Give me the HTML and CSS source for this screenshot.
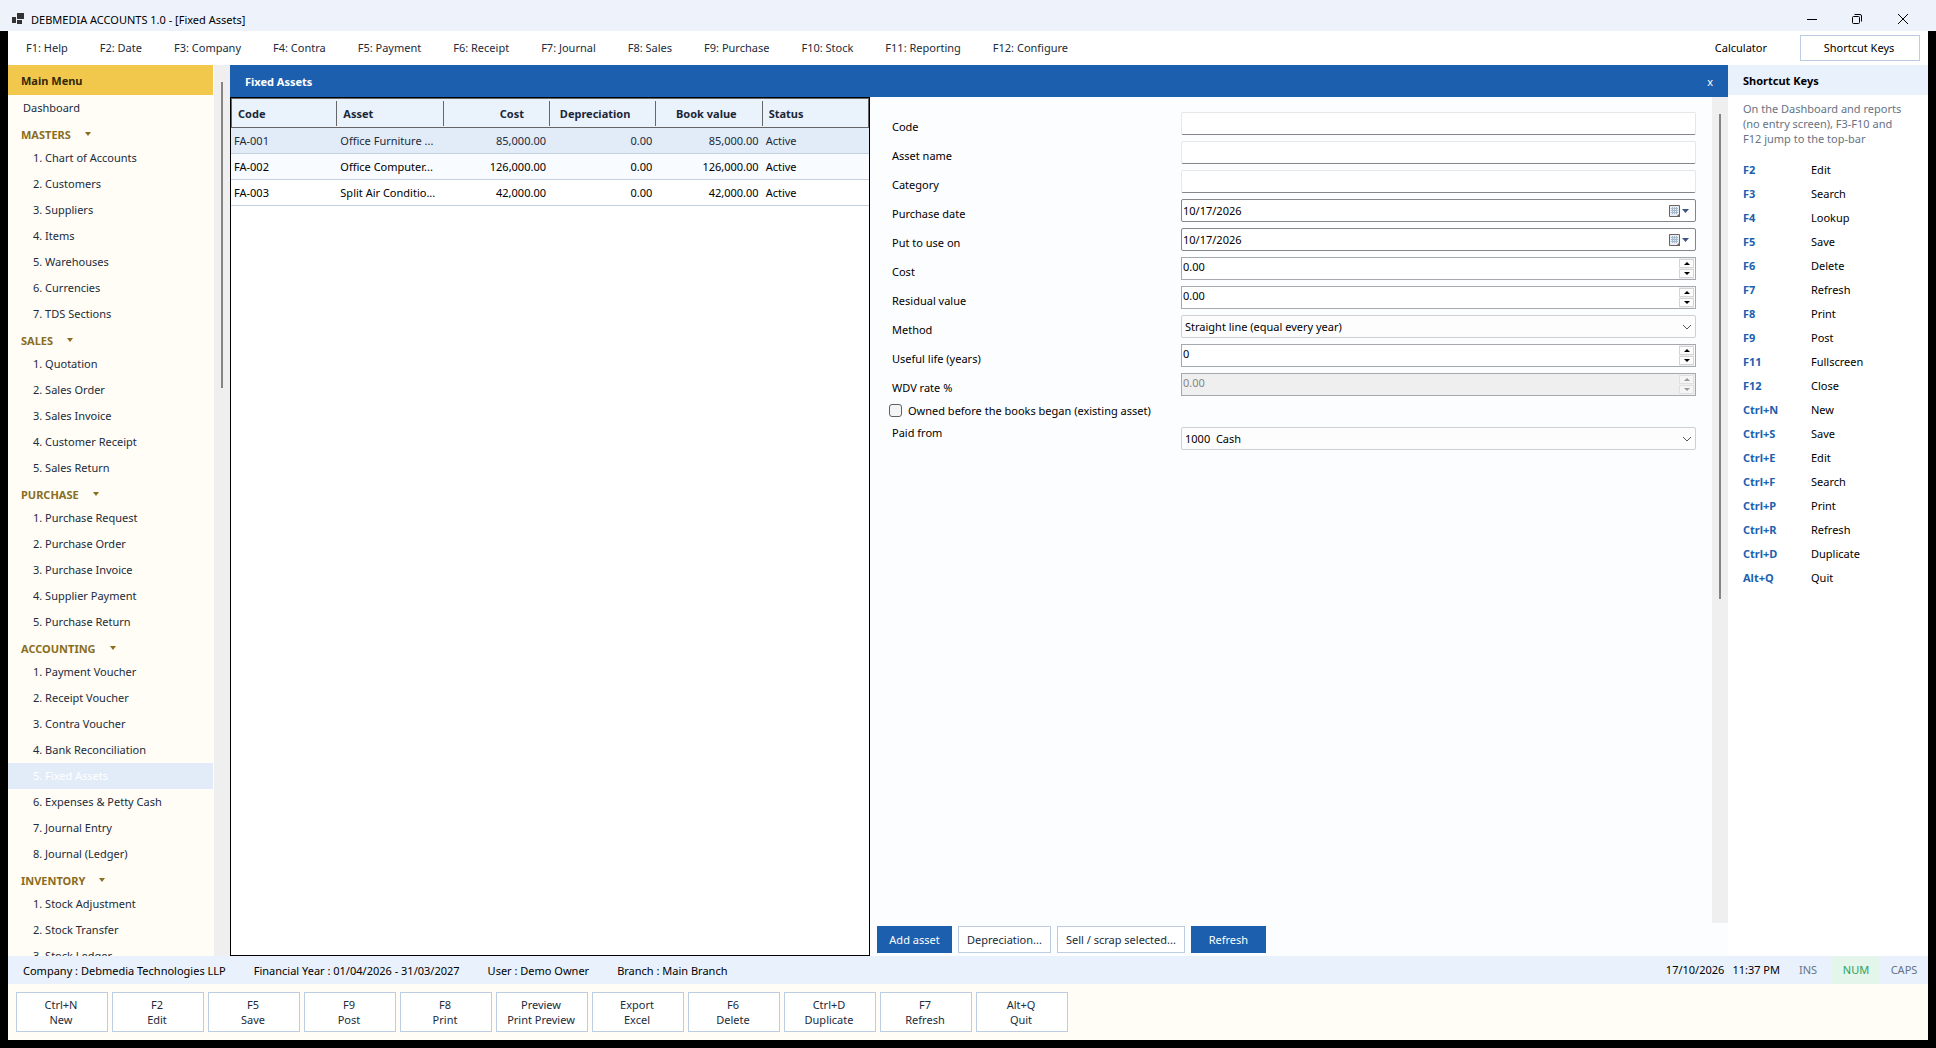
FILE: index.html
```html
<!DOCTYPE html>
<html lang="en">
<head>
<meta charset="utf-8">
<title>DEBMEDIA ACCOUNTS 1.0 - [Fixed Assets]</title>
<link rel="stylesheet" href="styles.css">
</head>
<body>
<header class="titlebar">
  <svg class="app-icon" width="12" height="12" viewBox="0 0 12 12" aria-hidden="true"><path fill="#333" d="M5 0h7v6H5zM0 4h4v6H0zM5 7h5v4H5z"/></svg>
  <h1 class="title">DEBMEDIA ACCOUNTS 1.0 - [Fixed Assets]</h1>
  <div class="window-controls">
    <button type="button" aria-label="Minimize"><svg width="12" height="12" viewBox="0 0 12 12"><path d="M1 6.500h10"/></svg></button>
    <button type="button" aria-label="Restore"><svg width="12" height="12" viewBox="0 0 12 12"><rect x="1.500" y="3.500" width="7" height="7" rx="1"/><path d="M3.500 1.500H9a1.500 1.500 0 0 1 1.500 1.500v5.500"/></svg></button>
    <button type="button" aria-label="Close"><svg width="12" height="12" viewBox="0 0 12 12"><path d="M1 1l10 10M11 1L1 11"/></svg></button>
  </div>
</header>
<div class="frame">
  <div class="menubar">
    <nav class="menu" aria-label="Function keys">
      <button type="button">F1: Help</button>
      <button type="button">F2: Date</button>
      <button type="button">F3: Company</button>
      <button type="button">F4: Contra</button>
      <button type="button">F5: Payment</button>
      <button type="button">F6: Receipt</button>
      <button type="button">F7: Journal</button>
      <button type="button">F8: Sales</button>
      <button type="button">F9: Purchase</button>
      <button type="button">F10: Stock</button>
      <button type="button">F11: Reporting</button>
      <button type="button">F12: Configure</button>
    </nav>
    <button type="button" class="calculator">Calculator</button>
    <button type="button" class="outlined shortcut-toggle">Shortcut Keys</button>
  </div>

  <div class="workspace">
    <aside class="sidebar">
      <nav class="sidebar-nav" aria-label="Main Menu">
        <h2 class="sidebar-title">Main Menu</h2>
        <a class="dashboard" href="#">Dashboard</a>
        <button type="button" class="group">MASTERS <span class="caret"></span></button>
        <a href="#">1. Chart of Accounts</a>
        <a href="#">2. Customers</a>
        <a href="#">3. Suppliers</a>
        <a href="#">4. Items</a>
        <a href="#">5. Warehouses</a>
        <a href="#">6. Currencies</a>
        <a href="#">7. TDS Sections</a>
        <button type="button" class="group">SALES <span class="caret"></span></button>
        <a href="#">1. Quotation</a>
        <a href="#">2. Sales Order</a>
        <a href="#">3. Sales Invoice</a>
        <a href="#">4. Customer Receipt</a>
        <a href="#">5. Sales Return</a>
        <button type="button" class="group">PURCHASE <span class="caret"></span></button>
        <a href="#">1. Purchase Request</a>
        <a href="#">2. Purchase Order</a>
        <a href="#">3. Purchase Invoice</a>
        <a href="#">4. Supplier Payment</a>
        <a href="#">5. Purchase Return</a>
        <button type="button" class="group">ACCOUNTING <span class="caret"></span></button>
        <a href="#">1. Payment Voucher</a>
        <a href="#">2. Receipt Voucher</a>
        <a href="#">3. Contra Voucher</a>
        <a href="#">4. Bank Reconciliation</a>
        <a class="current" href="#" aria-current="page">5. Fixed Assets</a>
        <a href="#">6. Expenses &amp; Petty Cash</a>
        <a href="#">7. Journal Entry</a>
        <a href="#">8. Journal (Ledger)</a>
        <button type="button" class="group">INVENTORY <span class="caret"></span></button>
        <a href="#">1. Stock Adjustment</a>
        <a href="#">2. Stock Transfer</a>
        <a href="#">3. Stock Ledger</a>
      </nav>
      <div class="scrollbar"><div class="thumb sidebar-thumb"></div></div>
    </aside>

    <main class="document">
      <div class="document-title">
        <h2>Fixed Assets</h2>
        <button type="button" aria-label="Close Fixed Assets">x</button>
      </div>
      <div class="panes">
        <section class="list" aria-label="Asset list">
          <table>
            <thead>
              <tr><th>Code</th><th>Asset</th><th class="num">Cost</th><th class="num">Depreciation</th><th class="num">Book value</th><th>Status</th></tr>
            </thead>
            <tbody>
              <tr class="selected"><td>FA-001</td><td>Office Furniture ...</td><td class="num">85,000.00</td><td class="num">0.00</td><td class="num">85,000.00</td><td>Active</td></tr>
              <tr class="alt"><td>FA-002</td><td>Office Computer...</td><td class="num">126,000.00</td><td class="num">0.00</td><td class="num">126,000.00</td><td>Active</td></tr>
              <tr><td>FA-003</td><td>Split Air Conditio...</td><td class="num">42,000.00</td><td class="num">0.00</td><td class="num">42,000.00</td><td>Active</td></tr>
            </tbody>
          </table>
        </section>

        <form class="entry">
          <div class="entry-body">
            <div class="fields">
              <div class="row"><label for="code">Code</label><input class="text" id="code" type="text"></div>
              <div class="row"><label for="name">Asset name</label><input class="text" id="name" type="text"></div>
              <div class="row"><label for="category">Category</label><input class="text" id="category" type="text"></div>
              <div class="row"><label for="purchased">Purchase date</label>
                <div class="field date"><input id="purchased" type="text" value="10/17/2026"><button type="button" aria-label="Pick purchase date"><svg width="22" height="14" viewBox="0 0 22 14"><path fill="#e9eef4" stroke="#6e625f" d="M1.500 1.500h10v9l-2 2h-8z"/><path stroke="#a9b9cc" d="M3 4.500h7M3 6.500h7M3 8.500h7M4.500 3v7M6.500 3v7M8.500 3v7"/><path fill="#6e625f" d="M12 9v4H8z"/><path fill="#3c5584" d="M14 5h7l-3.500 4z"/></svg></button></div></div>
              <div class="row"><label for="used">Put to use on</label>
                <div class="field date"><input id="used" type="text" value="10/17/2026"><button type="button" aria-label="Pick put to use date"><svg width="22" height="14" viewBox="0 0 22 14"><path fill="#e9eef4" stroke="#6e625f" d="M1.500 1.500h10v9l-2 2h-8z"/><path stroke="#a9b9cc" d="M3 4.500h7M3 6.500h7M3 8.500h7M4.500 3v7M6.500 3v7M8.500 3v7"/><path fill="#6e625f" d="M12 9v4H8z"/><path fill="#3c5584" d="M14 5h7l-3.500 4z"/></svg></button></div></div>
              <div class="row"><label for="cost">Cost</label>
                <div class="field spin"><input id="cost" type="text" inputmode="decimal" value="0.00"><span class="steps"><button type="button" class="up" aria-label="Increase cost"></button><button type="button" class="down" aria-label="Decrease cost"></button></span></div></div>
              <div class="row"><label for="residual">Residual value</label>
                <div class="field spin"><input id="residual" type="text" inputmode="decimal" value="0.00"><span class="steps"><button type="button" class="up" aria-label="Increase residual value"></button><button type="button" class="down" aria-label="Decrease residual value"></button></span></div></div>
              <div class="row"><label for="method">Method</label>
                <div class="field combo"><select id="method"><option>Straight line (equal every year)</option></select><svg width="10" height="6" viewBox="0 0 10 6" aria-hidden="true"><path d="M1 1l4 4 4-4"/></svg></div></div>
              <div class="row"><label for="life">Useful life (years)</label>
                <div class="field spin"><input id="life" type="text" inputmode="numeric" value="0"><span class="steps"><button type="button" class="up" aria-label="Increase useful life"></button><button type="button" class="down" aria-label="Decrease useful life"></button></span></div></div>
              <div class="row"><label for="wdv">WDV rate %</label>
                <div class="field spin disabled"><input id="wdv" type="text" value="0.00" disabled><span class="steps"><button type="button" class="up" aria-label="Increase WDV rate" disabled></button><button type="button" class="down" aria-label="Decrease WDV rate" disabled></button></span></div></div>
              <div class="check-row"><input id="owned" type="checkbox"><label for="owned">Owned before the books began (existing asset)</label></div>
              <div class="row paid"><label for="paid">Paid from</label>
                <div class="field combo"><select id="paid"><option>1000&nbsp; Cash</option></select><svg width="10" height="6" viewBox="0 0 10 6" aria-hidden="true"><path d="M1 1l4 4 4-4"/></svg></div></div>
            </div>
            <div class="scrollbar"><div class="thumb form-thumb"></div></div>
          </div>
          <div class="actions">
            <button type="button" class="primary">Add asset</button>
            <button type="button" class="outlined">Depreciation...</button>
            <button type="button" class="outlined">Sell / scrap selected...</button>
            <button type="button" class="primary">Refresh</button>
          </div>
        </form>
      </div>
    </main>

    <aside class="shortcuts">
      <h2>Shortcut Keys</h2>
      <p>On the Dashboard and reports<br>(no entry screen), F3-F10 and<br>F12 jump to the top-bar</p>
      <dl>
        <dt>F2</dt><dd>Edit</dd>
        <dt>F3</dt><dd>Search</dd>
        <dt>F4</dt><dd>Lookup</dd>
        <dt>F5</dt><dd>Save</dd>
        <dt>F6</dt><dd>Delete</dd>
        <dt>F7</dt><dd>Refresh</dd>
        <dt>F8</dt><dd>Print</dd>
        <dt>F9</dt><dd>Post</dd>
        <dt>F11</dt><dd>Fullscreen</dd>
        <dt>F12</dt><dd>Close</dd>
        <dt>Ctrl+N</dt><dd>New</dd>
        <dt>Ctrl+S</dt><dd>Save</dd>
        <dt>Ctrl+E</dt><dd>Edit</dd>
        <dt>Ctrl+F</dt><dd>Search</dd>
        <dt>Ctrl+P</dt><dd>Print</dd>
        <dt>Ctrl+R</dt><dd>Refresh</dd>
        <dt>Ctrl+D</dt><dd>Duplicate</dd>
        <dt>Alt+Q</dt><dd>Quit</dd>
      </dl>
    </aside>
  </div>

  <div class="statusbar">
    <span>Company : Debmedia Technologies LLP</span>
    <span>Financial Year : 01/04/2026 - 31/03/2027</span>
    <span>User : Demo Owner</span>
    <span>Branch : Main Branch</span>
    <div class="status-end">
      <time class="clock">17/10/2026</time>
      <time class="clock">11:37 PM</time>
      <span class="lock">INS</span>
      <span class="lock on">NUM</span>
      <span class="lock">CAPS</span>
    </div>
  </div>

  <footer class="keybar">
    <button type="button" class="outlined">Ctrl+N<br>New</button>
    <button type="button" class="outlined">F2<br>Edit</button>
    <button type="button" class="outlined">F5<br>Save</button>
    <button type="button" class="outlined">F9<br>Post</button>
    <button type="button" class="outlined">F8<br>Print</button>
    <button type="button" class="outlined">Preview<br>Print Preview</button>
    <button type="button" class="outlined">Export<br>Excel</button>
    <button type="button" class="outlined">F6<br>Delete</button>
    <button type="button" class="outlined">Ctrl+D<br>Duplicate</button>
    <button type="button" class="outlined">F7<br>Refresh</button>
    <button type="button" class="outlined">Alt+Q<br>Quit</button>
  </footer>
</div>
</body>
</html>
```
FILE: styles.css
```css
:root {
  --blue: #1c5fae;
  --pale: #e9f1fc;
  --cream: #fffdf5;
  --line: #bccde3;
  --ink: #212b3b;
}

* { box-sizing: border-box; }

body {
  margin: 0;
  height: 100vh;
  display: flex;
  flex-direction: column;
  background: #000;
  color: #000;
  font: 11px/15px "Noto Sans", "Open Sans", sans-serif;
}

h1, h2, p, dl, dd { margin: 0; }
h1, h2 { font-size: 11px; line-height: 15px; }

button, input, select {
  margin: 0;
  padding: 0;
  border: 0;
  border-radius: 0;
  background: none;
  color: inherit;
  font: inherit;
}

a { color: inherit; text-decoration: none; }

/* Window title bar */
.titlebar {
  flex: none;
  height: 31px;
  padding: 6px 9px 0 12px;
  display: flex;
  align-items: center;
  gap: 7px;
  background: #eef3fb;
}
.title { font-weight: 400; padding-top: 1px; }
.window-controls { margin-left: auto; display: flex; }
.window-controls button { width: 45px; height: 24px; display: grid; place-items: center; }
.window-controls button:last-child { width: 48px; }
.window-controls svg { fill: none; stroke: #000; }

.frame {
  flex: 1;
  min-height: 0;
  margin: 0 8px 8px;
  display: flex;
  flex-direction: column;
  background: #fff;
}

/* Function key menu */
.menubar {
  flex: none;
  height: 34px;
  padding: 0 8px 0 18px;
  display: flex;
  align-items: center;
  color: var(--ink);
}
.menu { display: flex; gap: 32px; padding-bottom: 2px; }
.calculator { margin-left: auto; padding-bottom: 2px; color: #000; }
.outlined { border: 1px solid var(--line); background: #fff; color: var(--ink); }
.shortcut-toggle { width: 120px; height: 26px; margin-left: 33px; padding: 0 2px 2px 0; color: #000; }

.workspace {
  flex: 1;
  min-height: 0;
  display: grid;
  grid-template-columns: 222px minmax(0, 1fr) 200px;
  grid-template-rows: minmax(0, 1fr);
}

.scrollbar { flex: none; width: 16px; padding-top: 17px; background: #efefef; }
.thumb { width: 2px; margin: 0 auto; background: #858585; }
.sidebar-thumb { height: 35%; }
.form-thumb { height: 60%; }

/* Main menu */
.sidebar { display: flex; background: var(--cream); }
.sidebar-nav {
  flex: 1;
  overflow: hidden;
  display: flex;
  flex-direction: column;
  color: var(--ink);
}
.sidebar-title {
  flex: none;
  height: 30px;
  margin-right: 1px;
  padding: 8px 13px 0;
  background: #f2c84c;
  color: #33290a;
}
.sidebar-nav a { flex: none; height: 26px; margin-right: 1px; padding: 5px 25px 0; }
.sidebar-nav .dashboard { padding-left: 15px; }
.sidebar-nav .current { background: #e2ecf8; color: #fff; }
.group {
  flex: none;
  height: 24px;
  padding: 2px 13px 0;
  display: flex;
  align-items: center;
  gap: 14px;
  color: #8a6d1f;
  font-weight: 700;
}
.caret { border: 3px solid transparent; border-top: 4px solid #8a6d1f; border-bottom: 0; }

/* Document */
.document { display: flex; flex-direction: column; min-height: 0; }
.document-title {
  flex: none;
  height: 32px;
  padding: 0 15px 0 15px;
  display: flex;
  align-items: center;
  justify-content: space-between;
  background: var(--blue);
  color: #fff;
}
.panes {
  flex: 1;
  min-height: 0;
  display: grid;
  grid-template-columns: 640fr 858fr;
  grid-template-rows: minmax(0, 1fr);
}

/* Asset list */
.list { border: 1px solid #000; background: #fff; }
.list table { width: 100%; border-collapse: separate; border-spacing: 0; table-layout: fixed; }
.list th {
  height: 30px;
  padding: 0 6px;
  border: solid #666;
  border-width: 1px 0;
  background: #eaf2fc linear-gradient(#666, #666) no-repeat right 2px / 1px 25px;
  color: #1b2739;
  text-align: left;
}
.list th:first-child { border-left-width: 1px; }
.list th:last-child { border-right-width: 1px; background-image: none; }
.list th.num { padding-right: 26px; text-align: right; }
.list td { height: 26px; padding: 0 3px; border-bottom: 1px solid #c3d0e0; white-space: nowrap; overflow: hidden; }
.list .num { text-align: right; }
.list td.num { padding-right: 4px; }
.list .selected { background: #e2ecf8; color: var(--ink); }
.list .alt { background: #f8fbff; }

/* Entry form */
.entry { display: flex; flex-direction: column; min-height: 0; background: #fcfdff; }
.entry-body { flex: 1; min-height: 0; display: flex; }
.fields { flex: 1; padding: 12px 16px 0 22px; }
.row {
  height: 29px;
  padding: 3px 0;
  display: grid;
  grid-template-columns: 289fr 515fr;
}
.row label { padding-top: 7px; }
.paid label { padding-top: 0; margin-top: -2px; }
.text, .field { width: 100%; height: 23px; background: #fff; }
.text { border: 1px solid #e6e7e9; border-bottom-color: #85868a; border-radius: 2px; padding: 0 3px; }
.field { display: flex; }
.field input, .field select { flex: 1; min-width: 0; }
.date { border: 1px solid #85868a; border-radius: 2px; padding: 0 5px 0 1px; align-items: center; }
.date button { height: 14px; line-height: 0; }
.spin { border: 1px solid #a5a8ad; padding: 0 1px; }
.spin input { height: 16px; }
.steps { width: 15px; padding: 1px 0; display: grid; gap: 1px; background: #efefef; }
.steps button { border: 1px solid #d4d4d4; background: #fdfdfd; display: grid; place-items: center; }
.steps button::before { content: ""; border: 3px solid transparent; }
.steps .up::before { border-top: 0; border-bottom: 3px solid #000; }
.steps .down::before { border-bottom: 0; border-top: 3px solid #000; }
.disabled { background: #efefef; color: #858585; }
.disabled .steps button { background: #f5f5f5; border-color: #e0e0e0; }
.disabled .steps .up::before { border-bottom-color: #999; }
.disabled .steps .down::before { border-top-color: #999; }
.combo { display: grid; align-items: center; border: 1px solid #cfd0d3; border-radius: 2px; background: #fdfdfd; }
.combo select { grid-area: 1 / 1; height: 21px; padding-left: 3px; appearance: none; }
.combo svg { grid-area: 1 / 1; justify-self: end; margin-right: 3px; fill: none; stroke: #555; pointer-events: none; }
.check-row { height: 25px; padding-bottom: 2px; display: flex; align-items: center; gap: 6px; margin-left: -3px; }
.check-row input {
  width: 13px;
  height: 13px;
  appearance: none;
  border: 1px solid #5f6062;
  border-radius: 3px;
  background: #f4f4f4;
}
.actions { flex: none; padding: 3px 7px; display: flex; gap: 6px; }
.actions button { min-width: 75px; height: 27px; padding: 0 8px; }
.primary { background: var(--blue); color: #fff; }

/* Shortcut list */
.shortcuts { background: #fff; }
.shortcuts h2 { height: 30px; padding: 8px 15px 0; background: var(--pale); }
.shortcuts p { padding: 6px 0 0 15px; color: #667385; white-space: nowrap; }
.shortcuts dl {
  padding: 12px 0 0 15px;
  display: grid;
  grid-template-columns: 68px 1fr;
  line-height: 24px;
}
.shortcuts dt { color: var(--blue); font-weight: 700; }

/* Status and key bars */
.statusbar {
  flex: none;
  height: 28px;
  padding-left: 15px;
  display: flex;
  align-items: center;
  gap: 28px;
  background: var(--pale);
}
.status-end { margin-left: auto; align-self: stretch; display: flex; line-height: 28px; }
.clock { margin-right: 8px; }
.clock + .lock { margin-left: -4px; }
.lock { width: 48px; text-align: center; color: #667385; }
.lock.on { background: #e4f5ec; color: #27a35b; }
.keybar { flex: none; height: 56px; padding: 8px; display: flex; gap: 4px; background: var(--cream); }
.keybar button { width: 92px; height: 40px; padding-right: 2px; }
```
